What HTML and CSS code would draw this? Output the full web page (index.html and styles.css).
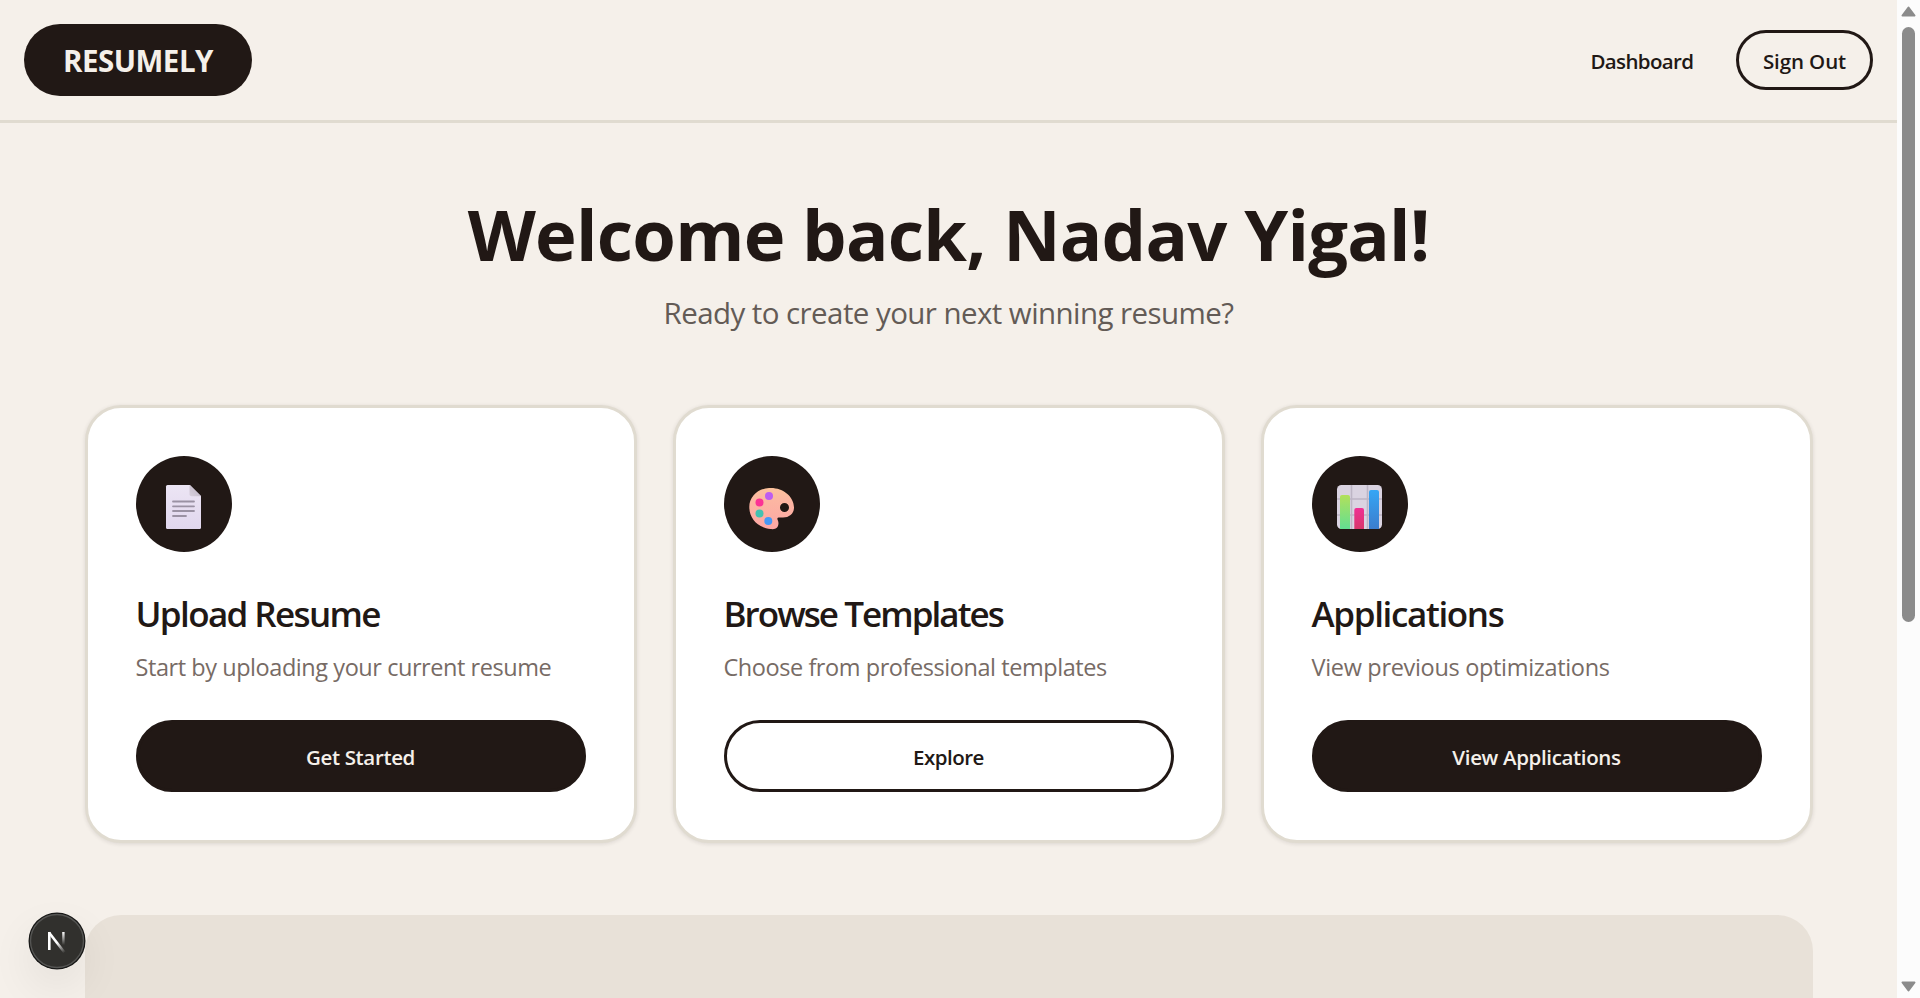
FILE: index.html
```html
<!DOCTYPE html>
<html lang="en">
<head>
<meta charset="utf-8">
<title>Resumely</title>
<link rel="stylesheet" href="styles.css">
</head>
<body>
<div class="window">
  <div class="page">
    <header class="header">
      <a class="logo"><span class="logo-text">RESUMELY</span></a>
      <nav class="nav">
        <a class="nav-link">Dashboard</a>
        <button class="signout"><span>Sign Out</span></button>
      </nav>
    </header>
    <main class="main">
      <h1 class="title">Welcome back, Nadav Yigal!</h1>
      <p class="subtitle">Ready to create your next winning resume?</p>
      <section class="cards">
        <article class="card">
          <div class="icon">
            <svg width="48" height="48" viewBox="0 0 48 48">
              <defs>
                <linearGradient id="paper" x1="0" y1="0" x2="0" y2="1"><stop offset="0" stop-color="#ece5f4"/><stop offset="1" stop-color="#e1d7ee"/></linearGradient>
                <linearGradient id="fold" x1="1" y1="0" x2="0" y2="1"><stop offset="0" stop-color="#b9b0bf"/><stop offset="1" stop-color="#d9d1de"/></linearGradient>
              </defs>
              <path d="M7.500 2H30L41 13v31.500q0 1.500-1.500 1.500h-32Q6 46 6 44.500v-41Q6 2 7.500 2z" fill="url(#paper)"/>
              <path d="M29.500 2 41 13.200h-9.500q-2 0-2-2z" fill="url(#fold)"/>
              <g stroke="#9a91a3" stroke-width="1.800" stroke-linecap="round"><path d="M13 18.500h21M13 23.300h21M13 28h21M13 33h13"/></g>
            </svg>
          </div>
          <h2 class="card-title t-upload">Upload Resume</h2>
          <p class="card-text d-upload">Start by uploading your current resume</p>
          <button class="btn dark"><span>Get Started</span></button>
        </article>
        <article class="card">
          <div class="icon">
            <svg width="48" height="48" viewBox="0 0 48 48">
              <defs><linearGradient id="wood" x1="0" y1="0" x2="0" y2="1"><stop offset="0" stop-color="#fcc29c"/><stop offset=".3" stop-color="#fcb6a2"/><stop offset="1" stop-color="#fda6a4"/></linearGradient></defs>
              <path fill-rule="evenodd" d="M21 5C34 4 46 13 46 24.500 46 31 41 34.500 35 34.500h-3.500c-2.300 0-2.500 1-1.800 2.500 1 2 1 4 .3 6-1 2.700-4.400 3.600-7.400 3.100C9 44.500 1.300 35 1.300 24 1.300 13.500 10 5.700 21 5zM36.500 20a4.500 4.500 0 1 0 0 9 4.500 4.500 0 0 0 0-9z" fill="url(#wood)"/>
              <circle cx="21" cy="13" r="4" fill="#bd5df0"/><circle cx="11.500" cy="19.500" r="4" fill="#fb3295"/><circle cx="11.500" cy="30.500" r="4" fill="#43c2b2"/><circle cx="20.300" cy="38" r="4" fill="#4698f6"/>
            </svg>
          </div>
          <h2 class="card-title t-browse">Browse Templates</h2>
          <p class="card-text d-browse">Choose from professional templates</p>
          <button class="btn outline"><span>Explore</span></button>
        </article>
        <article class="card">
          <div class="icon">
            <svg width="48" height="48" viewBox="0 0 48 48">
              <defs>
                <linearGradient id="green" x1="0" y1="0" x2="0" y2="1"><stop offset="0" stop-color="#b2e05b"/><stop offset="1" stop-color="#62df92"/></linearGradient>
                <linearGradient id="red" x1="0" y1="0" x2="0" y2="1"><stop offset="0" stop-color="#ef2f94"/><stop offset="1" stop-color="#d8366a"/></linearGradient>
                <linearGradient id="blue" x1="0" y1="0" x2="0" y2="1"><stop offset="0" stop-color="#35a6f5"/><stop offset="1" stop-color="#3c7dcd"/></linearGradient>
              </defs>
              <rect x="1" y="2" width="45" height="44" rx="4.500" fill="#dad3e1"/>
              <path d="M15.500 2v44M31.500 2v44M1 16h45M1 32h45" stroke="#bdb5c5" stroke-width="1.600" fill="none"/>
              <path d="M4 46V14q0-2 2-2h6q2 0 2 2v32z" fill="url(#green)"/>
              <path d="M18.300 46V27q0-2 2-2H26q2 0 2 2v19z" fill="url(#red)"/>
              <path d="M33 46V9q0-2 2-2h6q2 0 2 2v37z" fill="url(#blue)"/>
            </svg>
          </div>
          <h2 class="card-title t-apps">Applications</h2>
          <p class="card-text d-apps">View previous optimizations</p>
          <button class="btn dark"><span>View Applications</span></button>
        </article>
      </section>
      <section class="panel"></section>
    </main>
  </div>
  <aside class="scrollbar">
    <svg class="arrow" width="15" height="11" viewBox="0 0 15 11"><path d="M7.500 1.500 13.500 9.500h-12z" fill="#8b8b8b" stroke="#8b8b8b" stroke-width="2" stroke-linejoin="round"/></svg>
    <div class="thumb"></div>
    <svg class="arrow" width="15" height="11" viewBox="0 0 15 11"><path d="M7.500 9.500 13.500 1.500h-12z" fill="#8b8b8b" stroke="#8b8b8b" stroke-width="2" stroke-linejoin="round"/></svg>
  </aside>
  <div class="dev-badge">
    <svg width="58" height="58" viewBox="0 0 58 58">
      <defs>
        <linearGradient id="diag" gradientUnits="userSpaceOnUse" x1="30" y1="30" x2="37.500" y2="40"><stop stop-color="#fff"/><stop offset="1" stop-color="#fff" stop-opacity="0"/></linearGradient>
        <linearGradient id="stem" gradientUnits="userSpaceOnUse" x1="0" y1="20" x2="0" y2="33"><stop stop-color="#fff"/><stop offset="1" stop-color="#fff" stop-opacity="0"/></linearGradient>
      </defs>
      <circle cx="29" cy="29" r="28.500" fill="#171716"/>
      <circle cx="29" cy="29" r="26.500" fill="#31302d" stroke="#555553" stroke-width="1.400"/>
      <path d="M21.300 38V20" stroke="#fff" stroke-width="2.600"/>
      <path d="M21 20.500 36.500 40.500" stroke="url(#diag)" stroke-width="2.600"/>
      <path d="M35.400 20v13" stroke="url(#stem)" stroke-width="2.400"/>
    </svg>
  </div>
</div>
</body>
</html>
```
FILE: styles.css
```css
* { box-sizing: border-box; margin: 0; padding: 0; }
body { font-family: "Open Sans", "Noto Sans", sans-serif; background: #f5f0ea; color: #211815; }
.window { display: flex; width: 1920px; height: 998px; overflow: hidden; position: relative; }
.page { flex: 1; height: 998px; overflow: hidden; background: #f5f0ea; }

.header { height: 123px; padding: 0 24px; border-bottom: 3px solid #e0dbd0; display: flex; align-items: center; justify-content: space-between; }
.logo { width: 228px; height: 72px; border-radius: 36px; background: #211815; color: #f5f0ea; display: flex; align-items: center; justify-content: center; font-size: 29.5px; font-weight: 700; letter-spacing: -0.5px; }
.logo-text { white-space: nowrap; }
.nav { display: flex; align-items: center; gap: 42.5px; font-size: 20.5px; font-weight: 600; letter-spacing: -0.62px; }
.nav-link { padding-top: 2px; }
.signout { width: 137px; height: 60px; border: 3px solid #211815; border-radius: 30px; background: transparent; color: inherit; font: inherit; letter-spacing: -0.1px; padding-top: 2px; white-space: nowrap; }

.main { width: 1728px; margin: 0 auto; padding-top: 66px; }
.title { font-size: 70.500px; line-height: 90px; font-weight: 700; letter-spacing: -0.75px; text-align: center; white-space: nowrap; }
.subtitle { margin-top: 11px; font-size: 29.500px; line-height: 45px; letter-spacing: -0.57px; text-align: center; color: #635b56; white-space: nowrap; }

.cards { display: grid; grid-template-columns: repeat(3, 1fr); gap: 36px; margin-top: 70px; }
.card { height: 438px; padding: 48px; border: 3px solid #e0dbd0; border-radius: 36px; background: #fff; box-shadow: 0 1px 4px rgba(33, 24, 21, 0.12); display: flex; flex-direction: column; }
.icon { width: 96px; height: 96px; border-radius: 50%; background: #211815; display: flex; align-items: center; justify-content: center; padding-top: 6px; }
.card-title { margin-top: 39px; font-size: 35px; line-height: 45px; font-weight: 600; white-space: nowrap; }
.t-upload { letter-spacing: -1.620px; }
.t-browse { letter-spacing: -1.950px; }
.t-apps { letter-spacing: -1.360px; }
.card-text { margin-top: 13px; font-size: 23.500px; line-height: 36px; letter-spacing: -0.440px; color: #776b65; white-space: nowrap; }
.d-apps { letter-spacing: -0.320px; }
.btn { margin-top: 35px; height: 72px; border-radius: 36px; border: 3px solid #211815; font: 600 20.500px "Open Sans", "Noto Sans", sans-serif; letter-spacing: -0.35px; padding-top: 2px; }
.dark { background: #211815; color: #f5f0ea; }
.outline { background: #fff; color: #211815; letter-spacing: -0.5px; }
.panel { margin-top: 72px; height: 200px; border-radius: 36px; background: #e8e1d8; }

.scrollbar { width: 23px; height: 998px; background: #fcfcfc; display: flex; flex-direction: column; align-items: center; padding: 6px 0; }
.thumb { width: 13px; height: 595px; border-radius: 7px; background: #8b8b8b; margin: 10px 0 auto; }

.dev-badge { position: absolute; left: 28px; top: 912px; width: 58px; height: 58px; border-radius: 50%; box-shadow: 0 18px 44px rgba(0, 0, 0, 0.07); }
.dev-badge svg { display: block; }
```
